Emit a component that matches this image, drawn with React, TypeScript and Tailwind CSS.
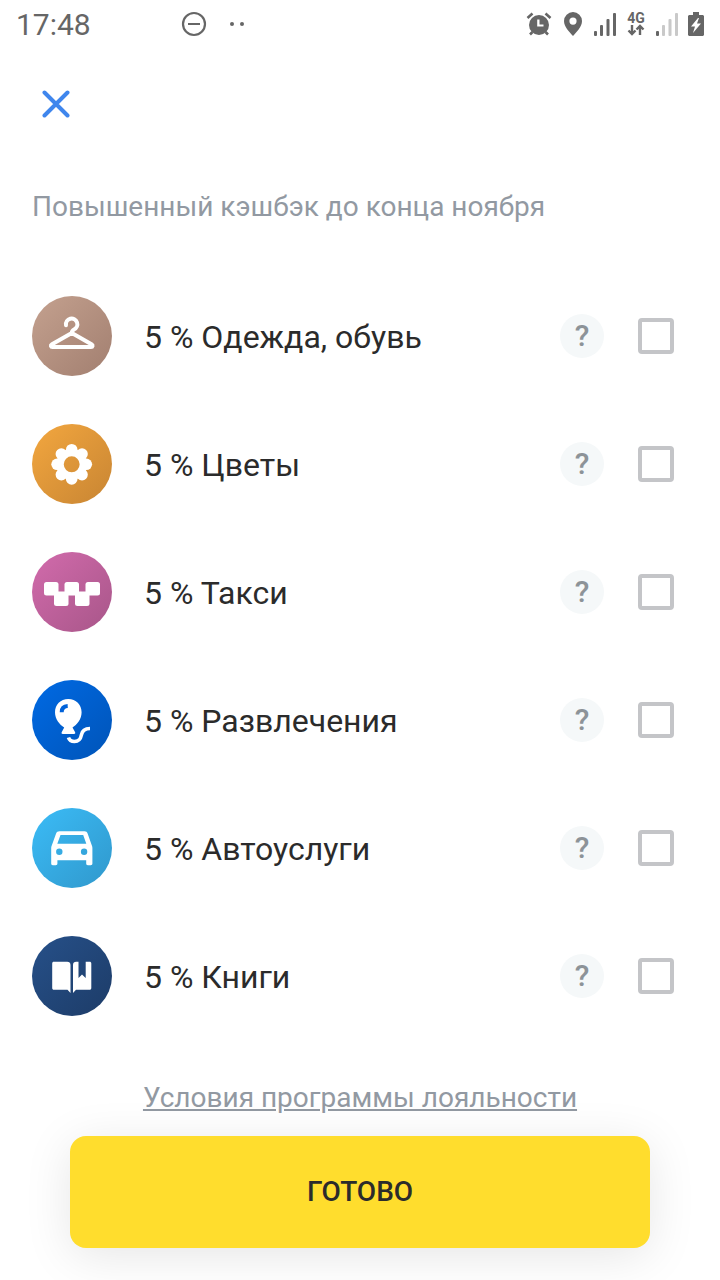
import React from 'react'

type BadgeProps = { children: React.ReactNode; bg: string }

const Badge = ({ children, bg }: BadgeProps) => (
  <span className={`size-20 shrink-0 rounded-full text-white ${bg}`}>
    <svg viewBox="0 0 80 80" className="size-full" fill="currentColor" aria-hidden="true">
      {children}
    </svg>
  </span>
)

const Hanger = () => (
  <path
    d="M34 29.2a5.7 5.7 0 1 1 8 4.3c-1.6.8-2.2 1.600-2.200 3.500L20 48.200c-1.800 1.100-1.200 2.800.5 2.800h38.500c1.700 0 2.300-1.700.5-2.800L39.800 37"
    fill="none"
    stroke="currentColor"
    strokeWidth="4"
    strokeLinecap="round"
    strokeLinejoin="round"
  />
)

const Flower = () => (
  <>
    {[0, 45, 90, 135, 180, 225, 270, 315].map((angle) => (
      <circle key={angle} cx="39.7" cy="25.7" r="5.8" transform={`rotate(${angle} 39.7 40.3)`} />
    ))}
    <circle cx="39.7" cy="40.3" r="11.7" fill="none" stroke="currentColor" strokeWidth="7.5" />
  </>
)

const Taxi = () => (
  <>
    <rect x="12" y="30" width="14.5" height="13.5" rx="2.5" />
    <rect x="32.5" y="30" width="14.5" height="13.5" rx="2.5" />
    <rect x="53.500" y="30" width="14.5" height="13.5" rx="2.5" />
    <rect x="22" y="39.500" width="14.5" height="14.5" rx="2.5" />
    <rect x="43" y="39.500" width="14.5" height="14.5" rx="2.5" />
  </>
)

const Balloon = () => (
  <>
    <path d="M36.300 19C28.500 19 23 24.800 23 32.300c0 7.200 4.800 12.400 9.200 15.200L29.800 52c-.6 1.200-.2 2 1 2h11.200c1.200 0 1.600-.8 1-2l-2.500-4.500c4.400-2.800 9.100-8 9.100-15.200C49.600 24.800 44 19 36.300 19Z" />
    <path d="M29.700 32.300c0-3.600 2.200-6 6-6.200" fill="none" stroke="#0062d9" strokeWidth="4" />
    <path
      d="M36.500 57.500c.8 2.800 3.300 4 6 4 5.200 0 6.300-3.300 7-6.800.7-3.800 2.800-6.200 8.500-6.200"
      fill="none"
      stroke="currentColor"
      strokeWidth="3.6"
    />
  </>
)

const Car = () => (
  <path
    fillRule="evenodd"
    d="M27.500 23.300h25c1.600 0 2.600.8 3.100 2.200l4.600 13c.1.500.2 1 .2 1.600v15.500c0 1-.6 1.600-1.600 1.600h-3c-1 0-1.600-.6-1.600-1.600v-3.300H25.400v3.300c0 1-.6 1.600-1.600 1.600h-3c-1 0-1.600-.6-1.600-1.600V40.100c0-.6.1-1.100.2-1.600l4.700-13c.5-1.400 1.700-2.200 3.400-2.200Zm1 3.700-3.200 8.700h29L51.200 27Zm-1.200 13.500a3.200 3.200 0 1 0 0 6.400 3.200 3.200 0 0 0 0-6.400Zm24.800 0a3.200 3.200 0 1 0 0 6.400 3.200 3.200 0 0 0 0-6.400Z"
  />
)

const Book = () => (
  <>
    <path d="M22 25.700h13.200c2 0 3.300 1.200 3.300 3.200v28l-3-3.200H22c-1.200 0-1.800-.6-1.800-1.800V27.500c0-1.200.6-1.800 1.800-1.800Z" />
    <path d="M44.200 25.700h2.300V42L50 38.500l3.700 3.500V25.700h3.800c1.200 0 1.800.6 1.800 1.800v24.400c0 1.200-.6 1.800-1.800 1.800H44l-3 3.200v-28c0-2 1.200-3.200 3.200-3.200Z" />
  </>
)

const categories = [
  { id: 'clothes', name: 'Одежда, обувь', icon: <Hanger />, bg: 'bg-linear-to-br from-[#c4a18f] to-[#a27f70]' },
  { id: 'flowers', name: 'Цветы', icon: <Flower />, bg: 'bg-linear-to-br from-[#f3a73f] to-[#c88533]' },
  { id: 'taxi', name: 'Такси', icon: <Taxi />, bg: 'bg-linear-to-br from-[#d26bac] to-[#a85689]' },
  { id: 'fun', name: 'Развлечения', icon: <Balloon />, bg: 'bg-linear-to-br from-[#006ae4] to-[#0054b8]' },
  { id: 'auto', name: 'Автоуслуги', icon: <Car />, bg: 'bg-linear-to-br from-[#3bbcf7] to-[#3098cc]' },
  { id: 'books', name: 'Книги', icon: <Book />, bg: 'bg-linear-to-br from-[#265089] to-[#1d3c68]' },
]

const Signal = ({ weak = false }: { weak?: boolean }) => (
  <svg viewBox="0 0 22 24" className="h-6 w-[22px]" fill="currentColor" aria-hidden="true">
    <rect x="0" y="19" width="3" height="5" rx="1" />
    <g opacity={weak ? 0.35 : 1}>
      <rect x="6" y="13" width="3" height="11" rx="1" />
      <rect x="12.5" y="7" width="3" height="17" rx="1" />
      <rect x="19" y="1" width="3" height="23" rx="1" />
    </g>
  </svg>
)

const StatusBar = () => (
  <header className="flex h-12 items-center px-4 text-[#666]">
    <time className="pt-0.5 text-[30px] leading-8">17:48</time>
    <svg viewBox="0 0 66 26" className="ml-[90px] h-[26px] w-[66px]" fill="currentColor" aria-hidden="true">
      <circle cx="13" cy="13" r="11" fill="none" stroke="currentColor" strokeWidth="2.2" />
      <path d="M7 12h12v2H7z" />
      <circle cx="51" cy="13" r="2" />
      <circle cx="61" cy="13" r="2" />
    </svg>
    <div className="ml-auto flex items-center gap-2.5">
      <div className="flex gap-3 pr-0.5">
        <svg viewBox="0 0 26 24" className="h-6 w-[26px]" fill="currentColor" aria-hidden="true">
          <path fillRule="evenodd" d="M13 3a10 10 0 1 1 0 20 10 10 0 0 1 0-20Zm-1.800 4.500v7h6.300v-2h-4v-5Z" />
          <path d="m1.500 6 5-4.500M24.500 6l-5-4.500M4 22.500l2.500-2.500M22 22.500 19.500 20" fill="none" stroke="currentColor" strokeWidth="2.6" />
        </svg>
        <svg viewBox="0 0 18 24" className="h-6 w-[18px]" fill="currentColor" aria-hidden="true">
          <path fillRule="evenodd" d="M9 0a9 9 0 0 1 9 9c0 6-5.500 11-9 15C5.500 20 0 15 0 9a9 9 0 0 1 9-9Zm0 5.500a3.600 3.600 0 1 0 0 7.200 3.600 3.600 0 0 0 0-7.200Z" />
        </svg>
      </div>
      <Signal />
      <div className="flex w-5 flex-col items-center">
        <span className="text-[14px] leading-3 font-bold">4G</span>
        <svg viewBox="0 0 18 12" className="h-3 w-[18px]" fill="none" stroke="currentColor" strokeWidth="2.4" aria-hidden="true">
          <path d="M5 1v9M1.500 6.500 5 10l3.500-3.500M13 11V2M9.500 5.500 13 2l3.500 3.500" />
        </svg>
      </div>
      <Signal weak />
      <svg viewBox="0 0 16 24" className="h-6 w-4" fill="currentColor" aria-hidden="true">
        <path fillRule="evenodd" d="M5 0h6v3h4l1 1v19l-1 1H1l-1-1V4l1-1h4ZM10 6 3 14.500h4L5 21l8-9.500H9L11 6Z" />
      </svg>
    </div>
  </header>
)

const App = () => {
  return (
    <div className="bg-white font-[Roboto,sans-serif] text-[#2b2b2b]">
      <StatusBar />
      <main className="flex flex-col px-8 pb-8">
        <button type="button" aria-label="Закрыть" className="mt-8 flex size-12 items-center justify-center text-[#3f86ed]">
          <svg viewBox="0 0 28 28" className="size-7" fill="none" stroke="currentColor" strokeWidth="4" strokeLinecap="round" aria-hidden="true">
            <path d="m2.500 2.500 23 23M25.500 2.500l-23 23" />
          </svg>
        </button>
        <h1 className="mt-[63px] text-[28px] leading-8 text-[#9299a2]">Повышенный кэшбэк до конца ноября</h1>
        <ul className="mt-[73px] space-y-12">
          {categories.map((item) => (
            <li key={item.id} className="flex items-center pr-[14px]">
              <Badge bg={item.bg}>{item.icon}</Badge>
              <label htmlFor={item.id} className="ml-8 flex-1 pt-0.5 text-[32px] leading-10">
                5 % {item.name}
              </label>
              <button
                type="button"
                aria-label={`Подробнее: ${item.name}`}
                className="size-11 rounded-full bg-[#f5f8f9] text-[30px] leading-11 font-medium text-[#8d9398]"
              >
                ?
              </button>
              <input
                id={item.id}
                type="checkbox"
                className="ml-[34px] size-9 appearance-none rounded-sm border-4 border-[#c4c5c8] checked:bg-[#ffdd2d]"
              />
            </li>
          ))}
        </ul>
        <a href="#terms" className="mt-16 self-center text-[28px] leading-9 text-[#9299a2] underline">
          Условия программы лояльности
        </a>
        <button
          type="button"
          className="mx-[38px] mt-5 h-28 rounded-2xl bg-[#ffdd2d] text-[28px] font-medium uppercase shadow-[0_8px_48px_rgba(0,0,0,0.1)]"
        >
          Готово
        </button>
      </main>
    </div>
  )
}

export default App
